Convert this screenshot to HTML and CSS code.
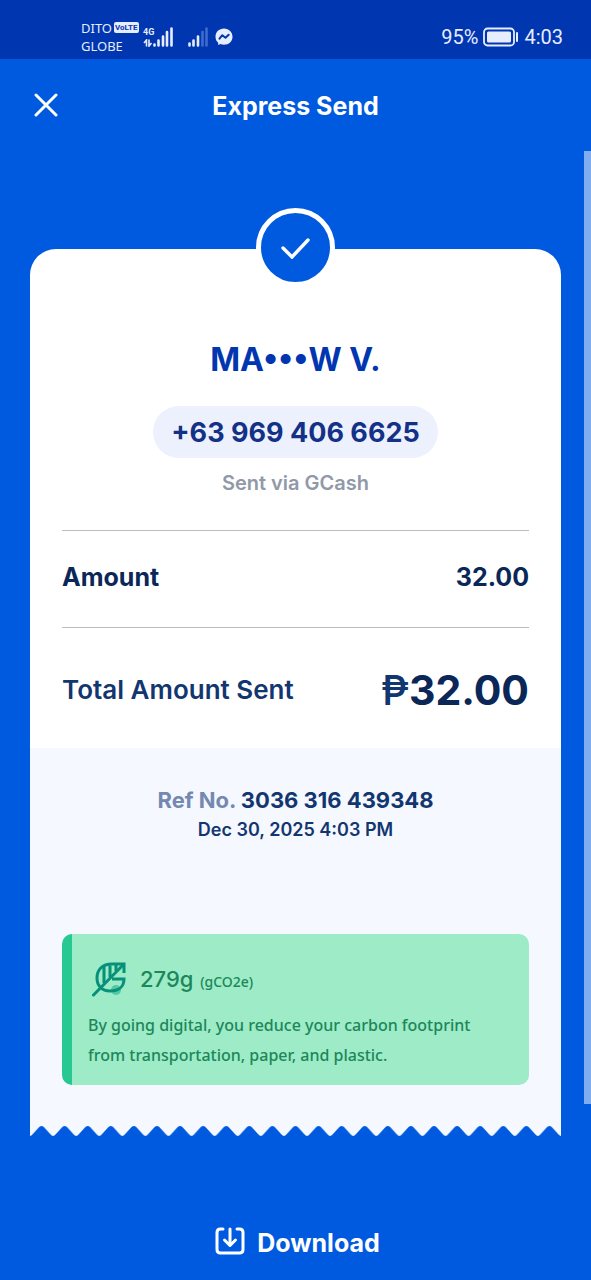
FILE: index.html
```html
<!DOCTYPE html>
<html lang="en">
<head>
<meta charset="utf-8">
<meta name="viewport" content="width=device-width, initial-scale=1">
<title>Express Send</title>
<link rel="stylesheet" href="styles.css">
</head>
<body>
<div class="app">
  <div class="status-bar">
    <div class="status-left">
      <div class="carriers">
        <div class="carrier">DITO <span class="volte">VoLTE</span></div>
        <div class="carrier">GLOBE</div>
      </div>
      <div class="network">
        <span class="network-type">4G</span>
        <svg width="10" height="8" viewBox="0 0 10 8" aria-hidden="true"><path d="M3.500 7.500V1L1 4M6 .5V7l2.500-3" fill="none" stroke="currentColor" stroke-width="1.600"/></svg>
      </div>
      <svg class="signal" width="20" height="20" viewBox="0 0 20 20" aria-hidden="true"><path d="M1.500 18.500v-1M5.500 18.500v-5M10 18.500v-9M14 18.500V5M18.500 18.500V1.500" stroke="currentColor" stroke-width="2.600" stroke-linecap="round"/></svg>
      <svg class="signal-second" width="20" height="20" viewBox="0 0 20 20" aria-hidden="true"><path d="M1.500 18.500v-2M5.500 18.500v-5M10 18.500v-9" stroke="currentColor" stroke-width="2.600" stroke-linecap="round"/><path d="M14.500 18.500V5M18.500 18.500V1.500" stroke="#3f6bcf" stroke-width="2.600" stroke-linecap="round"/></svg>
      <svg class="messenger" width="18" height="18" viewBox="0 0 18 18" aria-hidden="true"><path d="M9 .5C4 .5.5 4.100.5 8.700c0 2.500 1 4.500 2.700 6v2.300l2.300-.9c1 .4 2.200.6 3.500.6 5 0 8.500-3.500 8.500-8S14 .5 9 .5Z" fill="currentColor"/><path d="m4.500 10.700 2.800-3.500 3.200 2.600 3.200-3.100" fill="none" stroke="#0036b0" stroke-width="2" stroke-linejoin="round" stroke-linecap="round"/></svg>
    </div>
    <div class="status-right">
      <span>95%</span>
      <svg width="36" height="20" viewBox="0 0 36 20" aria-hidden="true"><rect x="1" y="1.500" width="30" height="17" rx="3.500" fill="none" stroke="currentColor" stroke-width="1.800"/><rect x="4" y="4.500" width="24" height="11" rx="1.500" fill="currentColor"/><path d="M34 6v8" stroke="currentColor" stroke-width="2" stroke-linecap="round"/></svg>
      <span>4:03</span>
    </div>
  </div>

  <header class="top-bar">
    <button class="close" type="button" aria-label="Close">
      <svg width="24" height="24" viewBox="0 0 24 24" aria-hidden="true"><path d="m2 2 20 20M22 2 2 22" stroke="currentColor" stroke-width="3" stroke-linecap="round"/></svg>
    </button>
    <h1 class="title">Express Send</h1>
  </header>

  <main class="content">
    <div class="scroll-thumb"></div>
    <article class="receipt">
      <div class="badge">
        <svg width="30" height="22" viewBox="0 0 30 22" aria-hidden="true"><path d="m3 11 9 9L28 3" fill="none" stroke="currentColor" stroke-width="3.400" stroke-linecap="round"/></svg>
      </div>
      <section class="recipient">
        <h2 class="name">MA•••W V.</h2>
        <p class="phone">+63 969 406 6625</p>
        <p class="via">Sent via GCash</p>
      </section>
      <dl class="amounts">
        <div class="row"><dt>Amount</dt><dd>32.00</dd></div>
        <div class="row total"><dt>Total Amount Sent</dt><dd><span class="peso">₱</span>32.00</dd></div>
      </dl>
      <section class="details">
        <p class="ref"><span class="ref-label">Ref No.</span> 3036 316 439348</p>
        <p class="date">Dec 30, 2025 4:03 PM</p>
        <div class="eco">
          <div class="eco-head">
            <svg width="36" height="36" viewBox="0 0 36 36" aria-hidden="true"><circle cx="24" cy="29" r="5" fill="#53c8a2"/><path d="M32 12V3H20C10 3 5 9 5 17s5 13 13 13 14-4 14-12H20M12 6v16M18 3.500V16M24 3.500V10" fill="none" stroke="#07907a" stroke-width="3"/><path d="M1.500 34 31 4" stroke="#07907a" stroke-width="3" stroke-linecap="round"/></svg>
            <p class="eco-amount"><span class="eco-value">279g</span> <span class="eco-unit">(gCO2e)</span></p>
          </div>
          <p class="eco-text">By going digital, you reduce your carbon footprint from transportation, paper, and plastic.</p>
        </div>
      </section>
      <svg class="tear" viewBox="0 0 460 12" preserveAspectRatio="none" aria-hidden="true">
        <defs><pattern id="tooth" width="20" height="12" patternUnits="userSpaceOnUse"><path d="M0 0H20V11Q19 11 17.500 9L12 2Q10 0 8 2L2.500 9Q1 11 0 11Z" fill="#f5f8ff"/></pattern></defs>
        <rect width="460" height="12" fill="url(#tooth)"/>
      </svg>
    </article>
  </main>

  <footer class="footer">
    <button class="download" type="button">
      <svg width="30" height="28" viewBox="0 0 30 28" aria-hidden="true"><path d="M8 2H5.500Q2 2 2 5.500v17Q2 26 5.500 26h19q3.500 0 3.500-3.500v-17Q28 2 24.500 2H22M15 2v16M9.500 13l5.500 5.500 5.500-5.500" fill="none" stroke="currentColor" stroke-width="3" stroke-linecap="round" stroke-linejoin="round"/></svg>
      <span>Download</span>
    </button>
  </footer>
</div>
</body>
</html>
```

FILE: styles.css
```css
* {
  box-sizing: border-box;
}

body,
h1,
h2,
p,
dl,
dd {
  margin: 0;
}

body {
  background: #005ae0;
  color: #0a2757;
  font-family: Inter, "Noto Sans", sans-serif;
}

button {
  padding: 0;
  border: 0;
  background: none;
  color: #fff;
  font: inherit;
}

svg {
  display: block;
  flex: none;
}

.app {
  display: flex;
  flex-direction: column;
  min-height: 100vh;
}

.status-bar {
  display: flex;
  justify-content: space-between;
  align-items: center;
  height: 59px;
  padding: 14px 28px 0 81px;
  background: #0036b0;
  color: #e6edff;
}

.status-left,
.status-right {
  display: flex;
  align-items: center;
}

.carriers {
  width: 62px;
  font: 13px/18px "Noto Sans", sans-serif;
}

.carrier {
  display: flex;
  align-items: center;
  gap: 2px;
}

.volte {
  padding: 0 1px;
  border-radius: 2px;
  background: #e6edff;
  color: #0036b0;
  font: bold 8px/11px Roboto, sans-serif;
}

.network {
  display: grid;
  gap: 2px;
  width: 10px;
}

.network-type {
  font: bold 9px/10px Roboto, sans-serif;
}

.signal-second {
  margin: 0 7px 0 15px;
}

.status-right {
  gap: 5px;
  font: 20px/24px Roboto, sans-serif;
}

.top-bar {
  display: grid;
  grid-template-columns: 24px 1fr 24px;
  align-items: center;
  height: 92px;
  padding: 0 34px;
}

.close {
  cursor: pointer;
}

.title {
  padding-top: 2px;
  color: #fff;
  font-size: 25px;
  font-weight: 700;
  line-height: 32px;
  text-align: center;
}

.content {
  position: relative;
  padding: 98px 30px 0;
}

.scroll-thumb {
  position: absolute;
  top: 0;
  right: 0;
  bottom: 33px;
  width: 7px;
  background: #80adef;
}

.receipt {
  position: relative;
}

.badge {
  position: absolute;
  top: -41px;
  left: 50%;
  display: grid;
  place-items: center;
  width: 79px;
  height: 79px;
  margin-left: -40px;
  border: 5px solid #fff;
  border-radius: 50%;
  background: #005ae0;
  color: #fff;
}

.recipient {
  display: flex;
  flex-direction: column;
  align-items: center;
  padding: 89px 32px 31px;
  border-radius: 26px 26px 0 0;
  background: #fff;
}

.name {
  color: #0036b0;
  font-size: 32px;
  font-weight: 700;
  line-height: 44px;
}

.phone {
  margin: 24px 0 9px;
  padding: 9px 18px 7px;
  border-radius: 26px;
  background: #edf1fd;
  color: #133187;
  font-size: 27px;
  font-weight: 700;
  line-height: 36px;
}

.via {
  color: #9199a8;
  font-size: 20px;
  font-weight: 600;
  line-height: 32px;
}

.amounts {
  padding: 0 32px;
  background: #fff;
}

.row {
  display: flex;
  justify-content: space-between;
  align-items: center;
  height: 97px;
  padding-bottom: 5px;
  border-top: 1px solid #b9bec5;
  font-size: 25px;
  font-weight: 700;
  line-height: 32px;
}

.total {
  height: 121px;
  padding: 3px 0 0;
}

.total dt {
  color: #12366f;
  font-size: 26px;
  font-weight: 600;
}

.total dd {
  font-size: 41px;
  font-weight: 700;
  line-height: 48px;
}

.peso {
  color: #12366f;
  font-weight: 500;
}

.details {
  padding: 36px 32px 40px;
  background: #f5f8ff;
  color: #12366f;
  text-align: center;
}

.ref {
  font-size: 22px;
  font-weight: 700;
  line-height: 32px;
}

.ref-label {
  color: #7488b0;
}

.date {
  font-size: 18px;
  font-weight: 600;
  line-height: 28px;
}

.eco {
  margin-top: 90px;
  padding: 27px 16px 15px;
  border-left: 10px solid #27c891;
  border-radius: 10px;
  background: #9debc7;
  color: #1c8759;
  text-align: left;
}

.eco-head {
  display: flex;
  align-items: flex-end;
  gap: 12px;
  padding-left: 4px;
}

.eco-amount {
  font-size: 14px;
  font-weight: 500;
  line-height: 30px;
}

.eco-value {
  margin-right: 3px;
  font-size: 22px;
}

.eco-unit {
  font-family: "Noto Sans", sans-serif;
}

.eco-text {
  max-width: 400px;
  margin-top: 13px;
  font: 500 16px/30px "Noto Sans", sans-serif;
}

.tear {
  width: 100%;
  height: 12px;
}

.footer {
  display: flex;
  flex: 1;
  justify-content: center;
  align-items: flex-end;
  padding-bottom: 21px;
}

.download {
  display: flex;
  align-items: center;
  gap: 12px;
  padding-left: 4px;
  font-size: 25px;
  font-weight: 700;
  line-height: 32px;
  cursor: pointer;
}

.download svg {
  margin-bottom: 4px;
}
```
